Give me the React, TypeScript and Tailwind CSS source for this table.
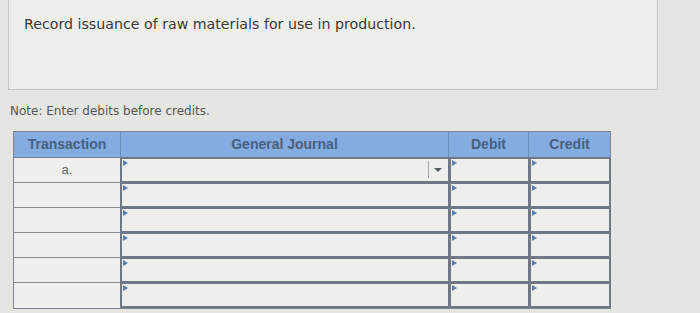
import React from "react";

const ROWS = ["a.", "", "", "", "", ""];

function Marker() {
  return (
    <span
      aria-hidden="true"
      className="absolute left-[1px] top-[1px] h-0 w-0 border-y-[3px] border-l-[5px] border-y-transparent border-l-[#5b7fa8]"
    />
  );
}

function InputCell({ dropdown }: { dropdown?: boolean }) {
  return (
    <div className="relative -ml-[1px] -mt-[1px] border-[2px] border-[#6f7884] bg-[#eeeeec]">
      <Marker />
      {dropdown && (
        <div className="absolute right-[6px] top-[2px] flex h-[17px] items-center gap-[5px]">
          <span className="h-full w-[1px] bg-[#a6a6a6]" />
          <span className="h-0 w-0 border-x-[4px] border-t-[4px] border-x-transparent border-t-[#555c66]" />
        </div>
      )}
    </div>
  );
}

export default function App() {
  return (
    <div
      className="h-[313px] w-[700px] overflow-hidden bg-[#e5e5e2] text-[#333]"
      style={{ fontFamily: '"DejaVu Sans", Verdana, sans-serif' }}
    >
      <div className="ml-[8px] h-[90px] w-[650px] border border-t-0 border-[#c6c6c4] bg-[#ededea] px-[15px] pt-[14px]">
        <p className="text-[14.2px] leading-[20px] text-[#3a3a3a]">
          Record issuance of raw materials for use in production.
        </p>
      </div>

      <p className="ml-[10px] mt-[14px] text-[12px] leading-[14px] text-[#555]">
        Note: Enter debits before credits.
      </p>

      <div
        className="ml-[13px] mt-[13px] w-[598px] border border-[#7d8690]"
        style={{ fontFamily: '"Liberation Sans", Arial, sans-serif' }}
      >
        <div className="grid h-[26px] grid-cols-[107px_328px_80px_81px] border-b border-[#6b86a8] bg-[#84ace0] text-[14px] font-bold text-[#46617f]">
          <div className="flex items-center justify-center border-r border-[#6a8cb8]">Transaction</div>
          <div className="flex items-center justify-center border-r border-[#6a8cb8]">General Journal</div>
          <div className="flex items-center justify-center border-r border-[#6a8cb8]">Debit</div>
          <div className="flex items-center justify-center">Credit</div>
        </div>

        {ROWS.map((label, i) => (
          <div
            key={i}
            className="grid h-[25px] grid-cols-[107px_329px_80px_81px]"
          >
            <div
              className={[
                "flex items-center justify-center border-r border-[#8a8d90] bg-[#efefed] text-[13px] text-[#666]",
                i < ROWS.length - 1 && "border-b",
              ]
                .filter(Boolean)
                .join(" ")}
            >
              {label}
            </div>
            <InputCell dropdown={i === 0} />
            <InputCell />
            <InputCell />
          </div>
        ))}
      </div>
    </div>
  );
}
